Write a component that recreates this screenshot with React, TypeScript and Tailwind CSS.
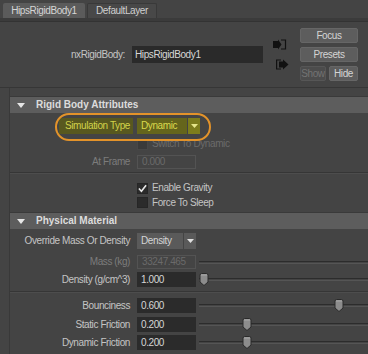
import React from 'react'

const label = 'w-[123px] shrink-0 text-right pr-[3px]'
const field = 'ml-[4px] w-[59px] h-full shrink-0 flex items-center pl-[4px]'

function Arrow({ color = '#e0e0e0' }: { color?: string }) {
  return (
    <svg width="7" height="4" viewBox="0 0 7 4">
      <path d="M0 0 H7 L3.5 4 Z" fill={color} />
    </svg>
  )
}

function Check({ checked, disabled }: { checked?: boolean; disabled?: boolean }) {
  return (
    <div
      className={
        'w-[11px] h-[11px] shrink-0 flex items-center justify-center ' +
        (disabled ? 'bg-[#3a3a3a] border border-[#474747]' : 'bg-[#2b2b2b] border border-[#262626]')
      }
    >
      {checked && (
        <svg width="10" height="9" viewBox="0 0 10 9">
          <path d="M1 4.5 L3.8 7.5 L9 1" fill="none" stroke="#e8e8e8" strokeWidth="1.8" />
        </svg>
      )}
    </div>
  )
}

function Slider({ pos }: { pos?: number }) {
  return (
    <div className="relative flex-1 h-full ml-[3px]">
      <div className="absolute left-0 right-0 top-[6px] h-[3px] border-t border-[#2c2c2c] border-b border-b-[#555]" />
      {pos !== undefined && (
        <svg className="absolute top-[1px]" style={{ left: pos - 5 }} width="10" height="13" viewBox="0 0 10 13">
          <path
            d="M1 2.2 Q1 0.5 2.7 0.5 H7.3 Q9 0.5 9 2.2 V9 L5 12.5 L1 9 Z"
            fill="#8c8c8c"
            stroke="#2a2a2a"
          />
          <path d="M2 2 H8" stroke="#a8a8a8" />
        </svg>
      )}
    </div>
  )
}

function NumRow({ name, value, pos, className }: { name: string; value: string; pos: number; className: string }) {
  return (
    <div className={'flex items-center h-[15px] ' + className}>
      <div className={label}>{name}</div>
      <div className={field + ' bg-[#2b2b2b] text-[#d6d6d6]'}>{value}</div>
      <Slider pos={pos} />
    </div>
  )
}

function Header({ title }: { title: string }) {
  return (
    <div className="h-[17px] shrink-0 bg-[#5d5d5d] border-t border-[#3a3a3a] flex items-center">
      <svg className="ml-[7px]" width="8" height="5" viewBox="0 0 8 5">
        <path d="M0 0 H8 L4 5 Z" fill="#e6e6e6" />
      </svg>
      <span className="ml-[11px] font-bold tracking-normal text-[#dcdcdc]">{title}</span>
    </div>
  )
}

function Separator({ className }: { className: string }) {
  return <div className={'h-[2px] border-t border-[#363636] border-b border-b-[#4d4d4d] ' + className} />
}

export default function App() {
  return (
    <div className="relative w-[368px] h-[354px] overflow-hidden bg-[#444444] text-[#c4c4c4] text-[10px] leading-none tracking-[-0.4px] font-['Liberation_Sans',Arial,sans-serif] flex flex-col">
      {/* Tabs */}
      <div className="h-[18px] shrink-0 flex items-end pl-[3px] gap-[2px]">
        <div className="h-[15px] w-[82px] bg-[#5b5b5b] rounded-t-[2px] flex items-center justify-center text-[#d6d6d6]">
          HipsRigidBody1
        </div>
        <div className="h-[15px] w-[70px] bg-[#484848] border border-b-0 border-[#393939] rounded-t-[2px] flex items-center justify-center text-[#cfcfcf]">
          DefaultLayer
        </div>
      </div>
      <div className="h-[4px] shrink-0 bg-[#3b3b3b] border-b border-[#333]" />

      {/* Node panel */}
      <div className="h-[66px] shrink-0 flex items-center border-b border-[#363636]">
        <div className="w-[125px] text-right">nxRigidBody:</div>
        <div className="ml-[7px] w-[131px] h-[17px] bg-[#2a2a2a] text-[#d6d6d6] flex items-center pl-[3px]">
          HipsRigidBody1
        </div>
        <div className="ml-[10px] w-[16px] flex flex-col gap-[9px]">
          <svg width="14" height="11" viewBox="0 0 14 11">
            <path d="M0 2 H5 V0.5 L8.5 5.5 L5 10.5 V9 H0 Z" fill="#111" />
            <path d="M8 1 H12.5 V10 H8" fill="none" stroke="#111" strokeWidth="1.2" />
          </svg>
          <svg className="ml-[3px]" width="13" height="11" viewBox="0 0 13 11">
            <path d="M5 1 H0.6 V10 H5" fill="none" stroke="#111" strokeWidth="1.2" />
            <path d="M3 2.5 H7 V0.5 L12.5 5.5 L7 10.5 V8.5 H3 Z" fill="#111" />
          </svg>
        </div>
        <div className="ml-[11px] w-[58px] flex flex-col gap-[4px]">
          <div className="h-[15px] bg-[#5d5d5d] border border-[#666] rounded-[2px] flex items-center justify-center text-[#d4d4d4]">
            Focus
          </div>
          <div className="h-[15px] bg-[#5d5d5d] border border-[#666] rounded-[2px] flex items-center justify-center text-[#d4d4d4]">
            Presets
          </div>
          <div className="h-[15px] flex gap-[3px]">
            <div className="w-[26px] bg-[#4c4c4c] border border-[#565656] rounded-[2px] flex items-center justify-center text-[#737373]">
              Show
            </div>
            <div className="flex-1 bg-[#5d5d5d] border border-[#666] rounded-[2px] flex items-center justify-center text-[#d4d4d4]">
              Hide
            </div>
          </div>
        </div>
      </div>

      {/* Attribute area */}
      <div className="flex-1 flex">
        <div className="w-[10px] shrink-0 border-r border-[#393939]" />
        <div className="flex-1 flex flex-col">
          <div className="h-[8px] shrink-0" />
          <Header title="Rigid Body Attributes" />
          <div className="h-[99px] shrink-0 flex flex-col">
            <div className="mt-[5px] h-[16px] flex items-center">
              <div className="w-[123px] shrink-0 flex justify-end">
                <span className="h-[16px] bg-[#58581f] text-[#d2d24a] flex items-center pl-[6px] pr-[3px]">
                  Simulation Type
                </span>
              </div>
              <div className="ml-[4px] w-[50px] h-full bg-[#65651c] text-[#dada4c] flex items-center pl-[4px]">
                Dynamic
              </div>
              <div className="ml-[1px] w-[12px] h-full bg-[#7d7d1c] flex items-center justify-center">
                <Arrow color="#e6e68a" />
              </div>
            </div>
            <div className="mt-[5px] h-[10px] flex items-center">
              <div className="w-[127px] shrink-0" />
              <Check disabled />
              <span className="ml-[4px] text-[#6b6b6b]">Switch To Dynamic</span>
            </div>
            <div className="mt-[6px] h-[14px] flex items-center">
              <div className={label + ' text-[#7c7c7c]'}>At Frame</div>
              <div className={field + ' border border-[#535353] text-[#6a6a6a]'}>0.000</div>
            </div>
            <Separator className="mt-[3px]" />
            <div className="mt-[9px] h-[10px] flex items-center">
              <div className="w-[127px] shrink-0" />
              <Check checked />
              <span className="ml-[4px]">Enable Gravity</span>
            </div>
            <div className="mt-[4px] h-[11px] flex items-center">
              <div className="w-[127px] shrink-0" />
              <Check />
              <span className="ml-[4px]">Force To Sleep</span>
            </div>
          </div>
          <Header title="Physical Material" />
          <div className="flex-1 flex flex-col">
            <div className="mt-[4px] h-[16px] flex items-center">
              <div className={label}>Override Mass Or Density</div>
              <div className="ml-[4px] w-[46px] h-full bg-[#5a5a5a] text-[#d4d4d4] flex items-center pl-[4px]">
                Density
              </div>
              <div className="ml-[1px] w-[12px] h-full bg-[#5a5a5a] flex items-center justify-center">
                <Arrow />
              </div>
            </div>
            <div className="mt-[6px] h-[14px] flex items-center">
              <div className={label + ' text-[#7c7c7c]'}>Mass (kg)</div>
              <div className={field + ' border border-[#535353] text-[#6a6a6a]'}>33247.465</div>
              <Slider />
            </div>
            <NumRow className="mt-[3px]" name="Density (g/cm^3)" value="1.000" pos={5} />
            <Separator className="mt-[4px]" />
            <NumRow className="mt-[5px]" name="Bounciness" value="0.600" pos={140} />
            <NumRow className="mt-[4px]" name="Static Friction" value="0.200" pos={48} />
            <NumRow className="mt-[3px]" name="Dynamic Friction" value="0.200" pos={48} />
          </div>
        </div>
      </div>

      {/* highlight callout */}
      <div className="absolute left-[55px] top-[113px] w-[156px] h-[28px] rounded-full border-2 border-[#e3932a]" />
    </div>
  )
}
